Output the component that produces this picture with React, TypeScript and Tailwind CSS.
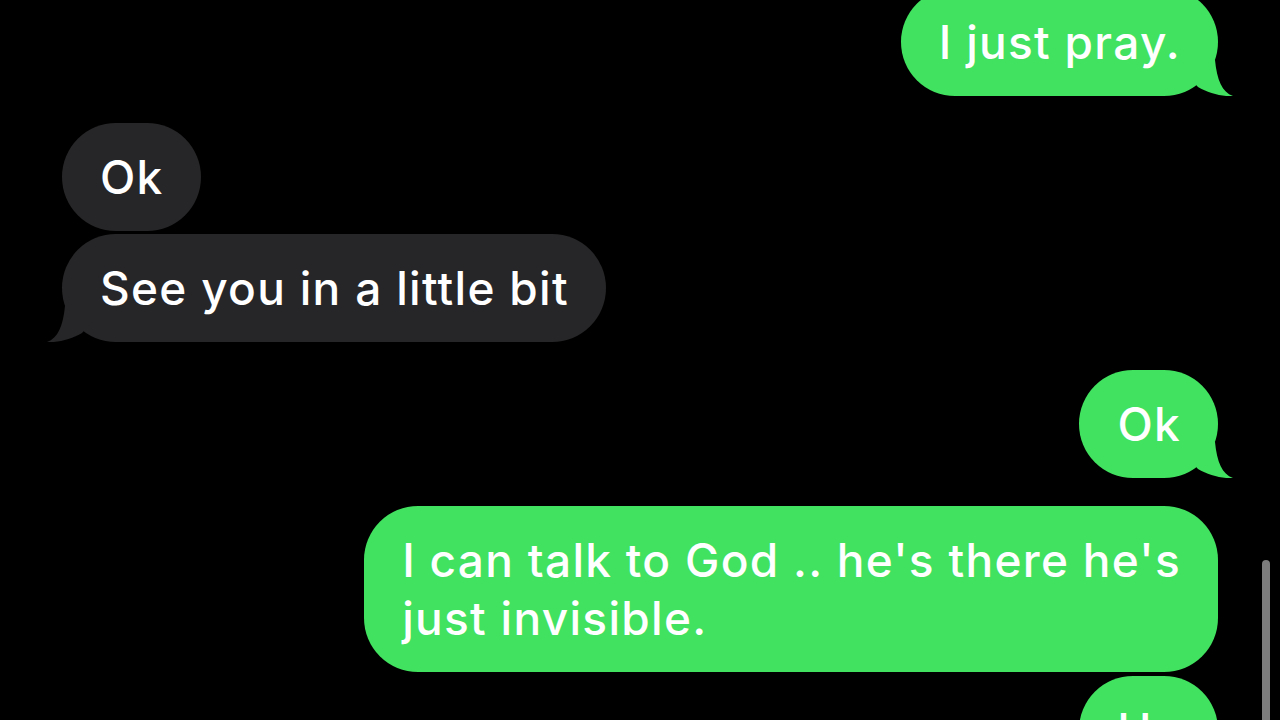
const GREEN = "bg-[#41e25f]";
const GREY = "bg-[#262628]";

function Tail({ side, color }: { side: "left" | "right"; color: string }) {
  return (
    <svg
      width="45"
      height="36"
      viewBox="-30 -36 45 36"
      className={
        side === "right"
          ? "absolute -right-[15px] bottom-0"
          : "absolute -left-[15px] bottom-0 -scale-x-100"
      }
    >
      <path
        d="M -30 -36 L -3 -36 C -1 -16, 4 -4, 15 0 C 5 1, -10 -3, -20 -9 L -30 -20 Z"
        fill={color}
      />
    </svg>
  );
}

function Bubble({
  text,
  sent,
  tail,
  className = "",
}: {
  text: React.ReactNode;
  sent?: boolean;
  tail?: boolean;
  className?: string;
}) {
  return (
    <div
      className={`relative whitespace-nowrap rounded-[54px] py-[25px] pl-[38px] pr-[37px] text-[46px] font-medium leading-[58px] text-white ${
        sent ? `${GREEN} self-end` : `${GREY} self-start`
      } ${className}`}
    >
      {text}
      {tail && <Tail side={sent ? "right" : "left"} color={sent ? "#41e25f" : "#262628"} />}
    </div>
  );
}

export default function App() {
  return (
    <div
      className="relative h-[720px] w-[1280px] overflow-hidden bg-black"
      style={{ fontFamily: "Inter, 'Noto Sans', sans-serif" }}
    >
      <div className="flex flex-col px-[62px] tracking-[1.3px]">
        <Bubble text="I just pray." sent tail className="-mt-[12px]" />
        <Bubble text="Ok" className="mt-[27px]" />
        <Bubble text="See you in a little bit" tail className="mt-[3px]" />
        <Bubble text="Ok" sent tail className="mt-[28px]" />
        <Bubble
          text={
            <>
              I can talk to God .. he's there he's
              <br />
              just invisible.
            </>
          }
          sent
          className="mt-[28px]"
        />
        <Bubble text="He" sent className="mt-[4px]" />
      </div>
      {/* scroll indicator */}
      <div className="absolute right-[10px] top-[560px] h-[200px] w-[8px] rounded-full bg-[#7d7d7d]" />
    </div>
  );
}
